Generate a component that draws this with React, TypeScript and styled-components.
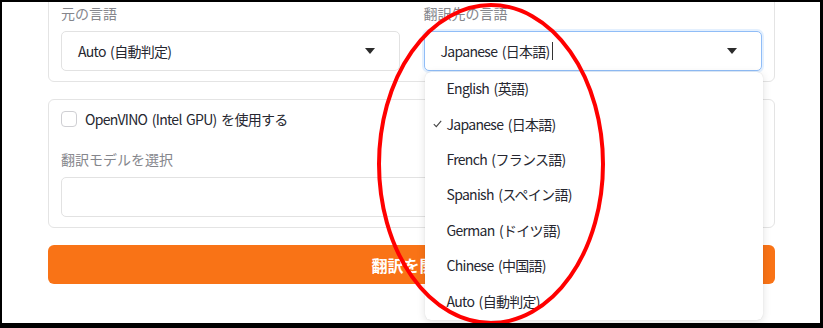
import React from 'react';
import styled, { createGlobalStyle } from 'styled-components';

const GlobalStyle = createGlobalStyle`
    html, body {
        margin: 0;
        padding: 0;
        background: #000;
    }
    body {
        font-family: "Noto Sans CJK JP", "Noto Sans", sans-serif;
        color: #31333f;
    }
`;

const languages = [
    'English (英語)',
    'Japanese (日本語)',
    'French (フランス語)',
    'Spanish (スペイン語)',
    'German (ドイツ語)',
    'Chinese (中国語)',
    'Auto (自動判定)',
];

function Caret() {
    return (
        <svg width="10" height="6" viewBox="0 0 10 6">
            <path d="M0 0 L10 0 L5 6 Z" fill="#2b2b2b" />
        </svg>
    );
}

function Check() {
    return (
        <svg width="9" height="8" viewBox="0 0 9 8">
            <path d="M0.8 4.2 L3.3 6.6 L8.2 0.8" fill="none" stroke="#444" strokeWidth="1.1" />
        </svg>
    );
}

function App() {
    return (
        <>
            <GlobalStyle />
            <Screen>
                <Content>
                    <Card>
                        <Columns>
                            <Field>
                                <Label>元の言語</Label>
                                <SelectBox>
                                    <SelectText>Auto (自動判定)</SelectText>
                                    <Caret />
                                </SelectBox>
                            </Field>
                            <Field>
                                <Label>翻訳先の言語</Label>
                                <SelectWrap>
                                    <SelectBox $focused>
                                        <SelectText>
                                            Japanese (日本語)<TextCursor />
                                        </SelectText>
                                        <Caret />
                                    </SelectBox>
                                    <Menu>
                                        {languages.map((lang) => (
                                            <MenuItem key={lang}>
                                                <CheckSlot>{lang.startsWith('Japanese') && <Check />}</CheckSlot>
                                                {lang}
                                            </MenuItem>
                                        ))}
                                    </Menu>
                                </SelectWrap>
                            </Field>
                        </Columns>
                    </Card>
                    <Card $top={11}>
                        <CheckRow>
                            <CheckBox />
                            <span>OpenVINO (Intel GPU) を使用する</span>
                        </CheckRow>
                        <Field>
                            <Label>翻訳モデルを選択</Label>
                            <InputBox />
                        </Field>
                    </Card>
                    <StartButton>翻訳を開始</StartButton>
                </Content>
                <Annotation width="818" height="321" viewBox="0 0 818 321">
                    <ellipse cx="489" cy="162" rx="112" ry="159" fill="none" stroke="#ff0000" strokeWidth="4" />
                </Annotation>
            </Screen>
        </>
    );
}

const Screen = styled.div`
    position: relative;
    margin: 2px 0 0 2px;
    width: 818px;
    height: 321px;
    background: #fff;
    overflow: hidden;
`;

const Content = styled.div`
    display: flex;
    flex-direction: column;
    gap: 17px;
    margin-top: -12px;
    padding: 0 45px 0 46px;
`;

const Card = styled.div<{ $top?: number }>`
    display: flex;
    flex-direction: column;
    gap: 22px;
    border: 1px solid #e4e4e4;
    border-radius: 6px;
    padding: ${(p) => p.$top ?? 12}px 12px 10px;
`;

const Columns = styled.div`
    display: grid;
    grid-template-columns: 1fr 1fr;
    gap: 24px;
`;

const Field = styled.div`
    display: flex;
    flex-direction: column;
    gap: 8px;
`;

const Label = styled.div`
    font-size: 14px;
    line-height: 20px;
    color: #85868c;
`;

const SelectWrap = styled.div`
    position: relative;
`;

const SelectBox = styled.div<{ $focused?: boolean }>`
    display: flex;
    align-items: center;
    justify-content: space-between;
    height: 40px;
    box-sizing: border-box;
    padding: 0 24px 0 16px;
    border: 1px solid ${(p) => (p.$focused ? '#90bdf7' : '#e2e2e2')};
    border-radius: 5px;
    box-shadow: ${(p) => (p.$focused ? '0 0 0 2px rgba(147, 197, 253, 0.25)' : 'none')};
    background: #fff;
`;

const SelectText = styled.span`
    display: flex;
    align-items: center;
    font-size: 14px;
    letter-spacing: -0.7px;
    word-spacing: 2px;
    color: #262730;
`;

const TextCursor = styled.span`
    display: inline-block;
    width: 1px;
    height: 18px;
    margin-left: 2px;
    background: #333;
`;

const Menu = styled.div`
    position: absolute;
    top: calc(100% + 1px);
    left: 1px;
    right: -1px;
    z-index: 5;
    background: #fff;
    border-radius: 6px;
    box-shadow: 0 2px 8px rgba(0, 0, 0, 0.12), 0 0 1px rgba(0, 0, 0, 0.15);
`;

const MenuItem = styled.div`
    display: flex;
    align-items: center;
    box-sizing: border-box;
    height: 35.4px;
    padding-bottom: 3px;
    font-size: 14px;
    letter-spacing: -0.7px;
    word-spacing: 2px;
    color: #262730;
`;

const CheckSlot = styled.span`
    display: flex;
    align-items: center;
    width: 14px;
    padding-left: 8px;
`;

const CheckRow = styled.label`
    display: flex;
    align-items: center;
    gap: 8px;
    font-size: 14px;
    letter-spacing: -0.7px;
    word-spacing: 2px;
    color: #262730;
    height: 16px;
`;

const CheckBox = styled.span`
    width: 16px;
    height: 16px;
    box-sizing: border-box;
    border: 1px solid #cfcfd3;
    border-radius: 4px;
    background: #fff;
`;

const InputBox = styled.div`
    height: 40px;
    box-sizing: border-box;
    border: 1px solid #e2e2e2;
    border-radius: 5px;
`;

const StartButton = styled.button`
    height: 39px;
    border: none;
    border-radius: 6px;
    background: #f97316;
    color: #fff;
    font-family: "Noto Sans CJK JP", "Noto Sans", sans-serif;
    font-size: 16px;
    font-weight: 700;
`;

const Annotation = styled.svg`
    position: absolute;
    top: 0;
    left: 0;
    z-index: 10;
    pointer-events: none;
`;

export default App;
